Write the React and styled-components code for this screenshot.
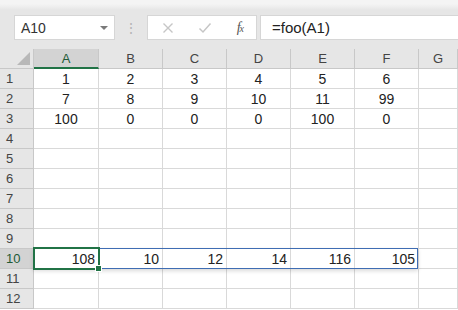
import React from 'react'
import styled, { createGlobalStyle } from 'styled-components'

const Global = createGlobalStyle`
  body {
    margin: 0;
    background: #fff;
    font-family: "Liberation Sans", Arial, sans-serif;
    overflow: hidden;
  }
`

const cols = ['A', 'B', 'C', 'D', 'E', 'F', 'G']

const data = {
  1: ['1', '2', '3', '4', '5', '6'],
  2: ['7', '8', '9', '10', '11', '99'],
  3: ['100', '0', '0', '0', '100', '0'],
  10: ['108', '10', '12', '14', '116', '105'],
}

export default function App() {
  const rows = Array.from({ length: 12 }, (_, i) => i + 1)
  return (
    <Page>
      <Global />
      <Toolbar>
        <NameBox>
          <span>A10</span>
          <Caret />
        </NameBox>
        <Dots>⋮</Dots>
        <Buttons>
          <svg width="12" height="12" viewBox="0 0 12 12">
            <path d="M1.5 1.5 L10.5 10.5 M10.5 1.5 L1.5 10.5" stroke="#c6c6c6" strokeWidth="1.4" fill="none" />
          </svg>
          <svg width="14" height="12" viewBox="0 0 14 12">
            <path d="M1.5 6.5 L5 10 L12.5 1.5" stroke="#c6c6c6" strokeWidth="1.5" fill="none" />
          </svg>
          <Fx>f<sub>x</sub></Fx>
        </Buttons>
        <Formula>=foo(A1)</Formula>
      </Toolbar>
      <Sheet>
        <Corner>
          <svg width="13" height="13" viewBox="0 0 13 13">
            <path d="M13 0 L13 13 L0 13 Z" fill="#b8b8b8" />
          </svg>
        </Corner>
        {cols.map(c => (
          <ColHead key={c} selected={c === 'A'}>{c}</ColHead>
        ))}
        {rows.map(r => (
          <React.Fragment key={r}>
            <RowHead selected={r === 10}>{r}</RowHead>
            {cols.map((c, i) => (
              <Cell key={c} right={r === 10}>
                {data[r]?.[i] ?? ''}
                {r === 10 && c === 'A' && (
                  <>
                    <Range />
                    <Active>
                      <Handle />
                    </Active>
                  </>
                )}
              </Cell>
            ))}
          </React.Fragment>
        ))}
      </Sheet>
    </Page>
  )
}

const Page = styled.div`
  width: 458px;
  height: 310px;
  overflow: hidden;
`

const Toolbar = styled.div`
  height: 49px;
  box-sizing: border-box;
  display: flex;
  align-items: center;
  padding: 6px 0 0 14px;
  background: linear-gradient(#f4f4f4 0px, #f4f4f4 4px, #e6e6e6 10px, #e6e6e6 100%);
`

const NameBox = styled.div`
  width: 101px;
  height: 25px;
  box-sizing: border-box;
  background: #fff;
  border: 1px solid #d6d6d6;
  display: flex;
  align-items: center;
  justify-content: space-between;
  padding: 0 6px 0 6px;
  font-size: 14px;
  color: #333;
`

const Caret = styled.span`
  width: 0;
  height: 0;
  border-left: 4px solid transparent;
  border-right: 4px solid transparent;
  border-top: 4px solid #7a7a7a;
`

const Dots = styled.span`
  width: 32px;
  text-align: center;
  color: #b5b5b5;
  font-size: 14px;
`

const Buttons = styled.div`
  width: 110px;
  height: 25px;
  box-sizing: border-box;
  background: #fff;
  border: 1px solid #d6d6d6;
  display: flex;
  align-items: center;
  justify-content: space-between;
  padding: 0 12px 0 14px;
  margin-right: 3px;
`

const Fx = styled.span`
  font-family: "Liberation Serif", serif;
  font-style: italic;
  font-size: 14px;
  color: #555;
  line-height: 1;

  sub {
    font-size: 10px;
    vertical-align: 0;
    margin-left: -1px;
  }
`

const Formula = styled.div`
  flex: 1;
  height: 25px;
  box-sizing: border-box;
  background: #fff;
  border: 1px solid #d6d6d6;
  border-right: 0;
  display: flex;
  align-items: center;
  padding-left: 11px;
  font-size: 15px;
  color: #222;
`

const Sheet = styled.div`
  display: grid;
  grid-template-columns: 34px 65px repeat(5, 64px) 1fr;
  grid-auto-rows: 20px;
  font-size: 14px;
  color: #222;
`

const Head = styled.div`
  box-sizing: border-box;
  background: ${({ selected }) => (selected ? '#d3d3d3' : '#e6e6e6')};
  border-right: 1px solid #c8c8c8;
  border-bottom: 1px solid #c8c8c8;
  display: flex;
  align-items: center;
  font-size: 13px;
  color: ${({ selected }) => (selected ? '#215a36' : '#444')};
`

const Corner = styled(Head)`
  justify-content: flex-end;
  align-items: flex-end;
  padding: 0 3px 3px 0;
`

const ColHead = styled(Head)`
  justify-content: center;
  ${({ selected }) => selected && 'border-bottom: 2px solid #217346;'}
`

const RowHead = styled(Head)`
  padding-left: 6px;
`

const Cell = styled.div`
  position: relative;
  box-sizing: border-box;
  border-right: 1px solid #d9d9d9;
  border-bottom: 1px solid #d9d9d9;
  display: flex;
  align-items: center;
  justify-content: ${({ right }) => (right ? 'flex-end' : 'center')};
  padding: ${({ right }) => (right ? '0 3px 0 0' : '0')};
  white-space: nowrap;
`

const Range = styled.div`
  position: absolute;
  z-index: 1;
  left: -1px;
  top: -1px;
  width: 385px;
  height: 21px;
  box-sizing: border-box;
  border: 1px solid #3f6db3;
  box-shadow: 0 2px 4px rgba(0, 0, 0, 0.15);
  pointer-events: none;
`

const Active = styled.div`
  position: absolute;
  z-index: 2;
  left: -1px;
  top: -2px;
  width: 67px;
  height: 23px;
  box-sizing: border-box;
  border: 2px solid #217346;
  pointer-events: none;
`

const Handle = styled.span`
  position: absolute;
  right: -4px;
  bottom: -4px;
  width: 5px;
  height: 5px;
  background: #217346;
  border: 1px solid #fff;
`
